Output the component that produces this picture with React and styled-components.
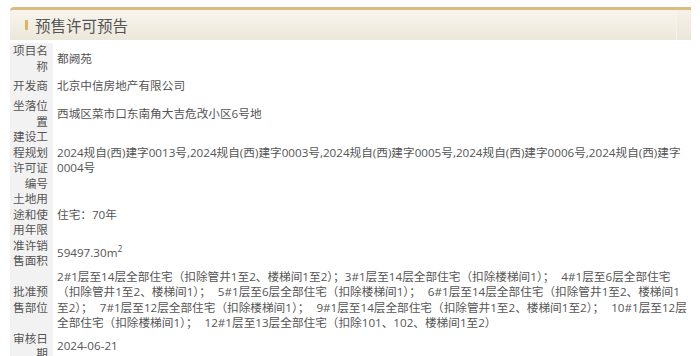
import React from 'react';
import styled, { createGlobalStyle } from 'styled-components';

const GlobalStyle = createGlobalStyle`
  html, body {
    margin: 0;
    padding: 0;
    background: #fff;
  }
  body {
    font-family: "Open Sans", "Noto Sans CJK SC", sans-serif;
    color: #555;
  }
`;

const Panel = styled.div`
  width: 681px;
  padding: 7px 0 0 10px;
`;

const Header = styled.div`
  display: flex;
  align-items: center;
  height: 30px;
  border-top: 3px solid #dcbb80;
  border-top-left-radius: 4px;
  background: linear-gradient(#f8f5ee, #ece7da);
`;

const Bar = styled.span`
  width: 3px;
  height: 10px;
  margin: 0 7px 0 15px;
  background: #e6b15c;
`;

const Title = styled.h2`
  flex: 1;
  margin: 0;
  font-family: "Noto Sans CJK SC", sans-serif;
  font-size: 15.5px;
  font-weight: normal;
  line-height: 30px;
  color: #555;
`;

const Cap = styled.span`
  align-self: stretch;
  width: 14px;
  border-left: 1px solid #f6f2ea;
  background: linear-gradient(#f5f1e8, #ebe6da);
`;

const Table = styled.div`
  display: grid;
  grid-template-columns: 43px 1fr;
  margin-top: 3px;
  font-size: 11.65px;
  line-height: 15.5px;
`;

const Label = styled.div`
  display: flex;
  align-items: center;
  justify-content: flex-end;
  min-height: 24px;
  padding: 0 5px 0 2px;
  text-align: right;
  background: #f2f2f2;
  color: #555;
`;

const Value = styled.div`
  display: flex;
  align-items: center;
  padding: 0 3px 0 4px;
  word-spacing: 4px;
  color: #555;
`;

const Text = styled.span`
  sup {
    font-size: 8.5px;
    line-height: 0;
    vertical-align: 5px;
  }
`;

const rows = [
  ['项目名称', '都阙苑'],
  ['开发商', '北京中信房地产有限公司'],
  ['坐落位置', '西城区菜市口东南角大吉危改小区6号地'],
  [
    '建设工程规划许可证编号',
    '2024规自(西)建字0013号,2024规自(西)建字0003号,2024规自(西)建字0005号,2024规自(西)建字0006号,2024规自(西)建字0004号',
  ],
  ['土地用途和使用年限', '住宅：70年'],
  ['准许销售面积', <>59497.30m<sup>2</sup></>],
  [
    '批准预售部位',
    '2#1层至14层全部住宅（扣除管井1至2、楼梯间1至2）；3#1层至14层全部住宅（扣除楼梯间1）； 4#1层至6层全部住宅（扣除管井1至2、楼梯间1）； 5#1层至6层全部住宅（扣除楼梯间1）； 6#1层至14层全部住宅（扣除管井1至2、楼梯间1至2）； 7#1层至12层全部住宅（扣除楼梯间1）； 9#1层至14层全部住宅（扣除管井1至2、楼梯间1至2）； 10#1层至12层全部住宅（扣除楼梯间1）； 12#1层至13层全部住宅（扣除101、102、楼梯间1至2）',
  ],
  ['审核日期', '2024-06-21'],
];

export default function App() {
  return (
    <Panel>
      <GlobalStyle />
      <Header>
        <Bar />
        <Title>预售许可预告</Title>
        <Cap />
      </Header>
      <Table>
        {rows.map(([label, value], i) => (
          <React.Fragment key={i}>
            <Label>{label}</Label>
            <Value>
              <Text>{value}</Text>
            </Value>
          </React.Fragment>
        ))}
      </Table>
    </Panel>
  );
}
